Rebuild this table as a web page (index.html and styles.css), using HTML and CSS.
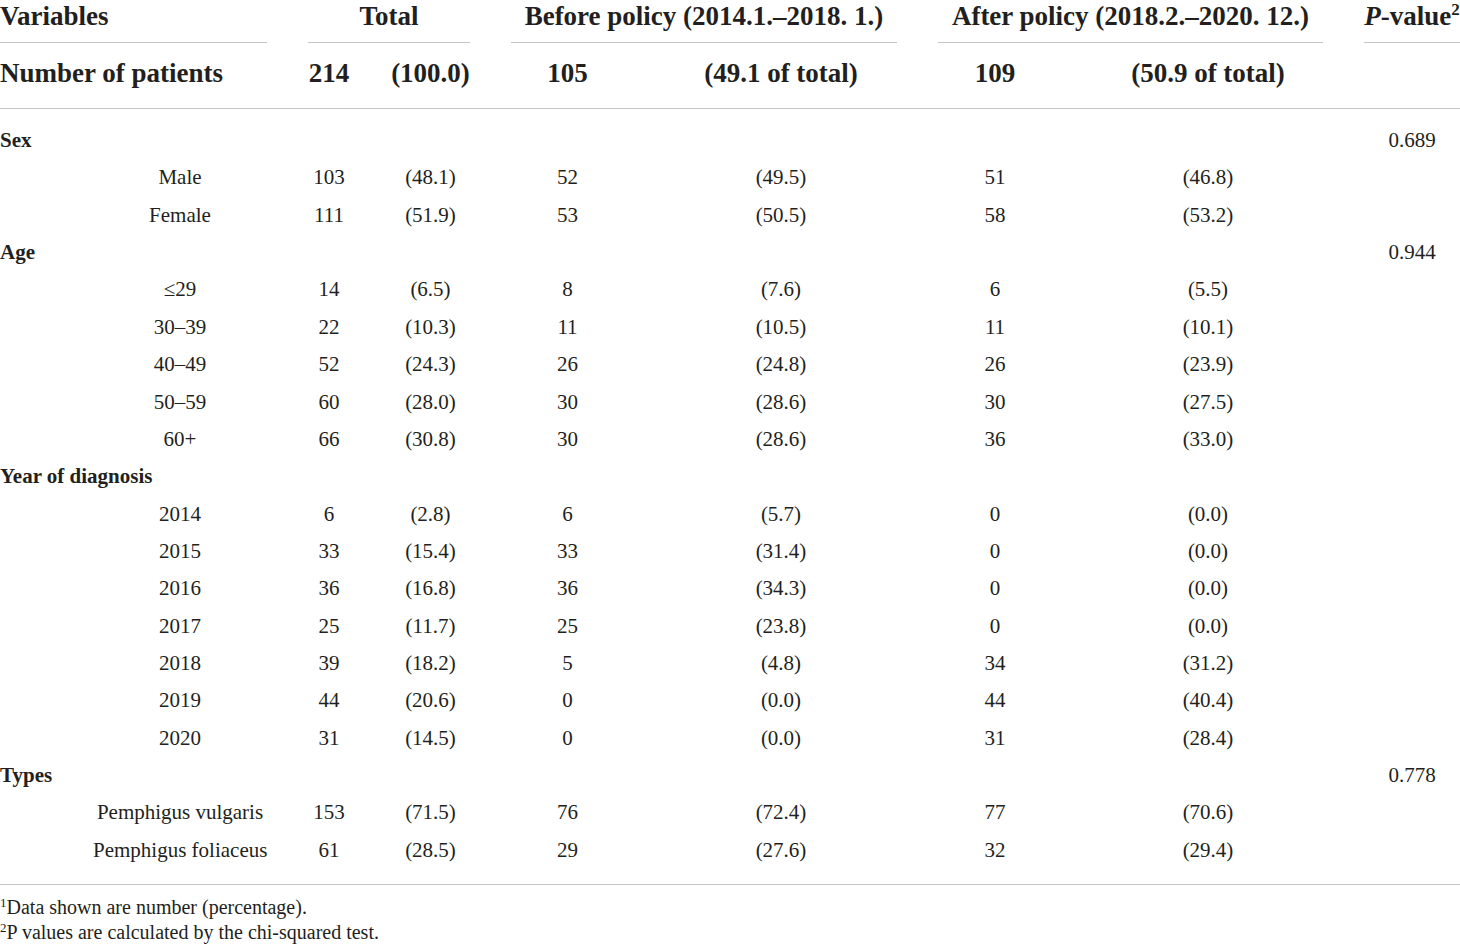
FILE: index.html
```html
<!DOCTYPE html>
<html lang="en">
<head>
    <meta charset="UTF-8">
    <meta name="viewport" content="width=device-width, initial-scale=1.0">
    <title>Patient characteristics before and after policy</title>
    <link rel="stylesheet" href="styles.css">
</head>
<body>
    <div class="tbl">
        <!-- Header -->
        <div class="head left">Variables</div>
        <div class="head span2">Total</div>
        <div class="head span2">Before policy (2014.1.&ndash;2018. 1.)</div>
        <div class="head span2">After policy (2018.2.&ndash;2020. 12.)</div>
        <div class="head"><i>P</i>-value<sup>2</sup></div>

        <div class="lead left">Number of patients</div>
        <div class="lead">214</div>
        <div class="lead">(100.0)</div>
        <div class="lead">105</div>
        <div class="lead">(49.1 of total)</div>
        <div class="lead">109</div>
        <div class="lead">(50.9 of total)</div>
        <div class="lead"></div>

        <div class="rule"></div>
        <div class="space-top"></div>

        <!-- Sex -->
        <div class="cat">Sex</div>
        <div class="cell pcol">0.689</div>

        <div class="cell sub">Male</div><div class="cell">103</div><div class="cell">(48.1)</div><div class="cell">52</div><div class="cell">(49.5)</div><div class="cell">51</div><div class="cell">(46.8)</div><div class="cell"></div>
        <div class="cell sub">Female</div><div class="cell">111</div><div class="cell">(51.9)</div><div class="cell">53</div><div class="cell">(50.5)</div><div class="cell">58</div><div class="cell">(53.2)</div><div class="cell"></div>

        <!-- Age -->
        <div class="cat">Age</div>
        <div class="cell pcol">0.944</div>

        <div class="cell sub">&le;29</div><div class="cell">14</div><div class="cell">(6.5)</div><div class="cell">8</div><div class="cell">(7.6)</div><div class="cell">6</div><div class="cell">(5.5)</div><div class="cell"></div>
        <div class="cell sub">30&ndash;39</div><div class="cell">22</div><div class="cell">(10.3)</div><div class="cell">11</div><div class="cell">(10.5)</div><div class="cell">11</div><div class="cell">(10.1)</div><div class="cell"></div>
        <div class="cell sub">40&ndash;49</div><div class="cell">52</div><div class="cell">(24.3)</div><div class="cell">26</div><div class="cell">(24.8)</div><div class="cell">26</div><div class="cell">(23.9)</div><div class="cell"></div>
        <div class="cell sub">50&ndash;59</div><div class="cell">60</div><div class="cell">(28.0)</div><div class="cell">30</div><div class="cell">(28.6)</div><div class="cell">30</div><div class="cell">(27.5)</div><div class="cell"></div>
        <div class="cell sub">60+</div><div class="cell">66</div><div class="cell">(30.8)</div><div class="cell">30</div><div class="cell">(28.6)</div><div class="cell">36</div><div class="cell">(33.0)</div><div class="cell"></div>

        <!-- Year of diagnosis -->
        <div class="cat">Year of diagnosis</div>
        <div class="cell pcol"></div>

        <div class="cell sub">2014</div><div class="cell">6</div><div class="cell">(2.8)</div><div class="cell">6</div><div class="cell">(5.7)</div><div class="cell">0</div><div class="cell">(0.0)</div><div class="cell"></div>
        <div class="cell sub">2015</div><div class="cell">33</div><div class="cell">(15.4)</div><div class="cell">33</div><div class="cell">(31.4)</div><div class="cell">0</div><div class="cell">(0.0)</div><div class="cell"></div>
        <div class="cell sub">2016</div><div class="cell">36</div><div class="cell">(16.8)</div><div class="cell">36</div><div class="cell">(34.3)</div><div class="cell">0</div><div class="cell">(0.0)</div><div class="cell"></div>
        <div class="cell sub">2017</div><div class="cell">25</div><div class="cell">(11.7)</div><div class="cell">25</div><div class="cell">(23.8)</div><div class="cell">0</div><div class="cell">(0.0)</div><div class="cell"></div>
        <div class="cell sub">2018</div><div class="cell">39</div><div class="cell">(18.2)</div><div class="cell">5</div><div class="cell">(4.8)</div><div class="cell">34</div><div class="cell">(31.2)</div><div class="cell"></div>
        <div class="cell sub">2019</div><div class="cell">44</div><div class="cell">(20.6)</div><div class="cell">0</div><div class="cell">(0.0)</div><div class="cell">44</div><div class="cell">(40.4)</div><div class="cell"></div>
        <div class="cell sub">2020</div><div class="cell">31</div><div class="cell">(14.5)</div><div class="cell">0</div><div class="cell">(0.0)</div><div class="cell">31</div><div class="cell">(28.4)</div><div class="cell"></div>

        <!-- Types -->
        <div class="cat">Types</div>
        <div class="cell pcol">0.778</div>

        <div class="cell sub">Pemphigus vulgaris</div><div class="cell">153</div><div class="cell">(71.5)</div><div class="cell">76</div><div class="cell">(72.4)</div><div class="cell">77</div><div class="cell">(70.6)</div><div class="cell"></div>
        <div class="cell sub">Pemphigus foliaceus</div><div class="cell">61</div><div class="cell">(28.5)</div><div class="cell">29</div><div class="cell">(27.6)</div><div class="cell">32</div><div class="cell">(29.4)</div><div class="cell"></div>

        <div class="space-bottom"></div>
        <div class="rule"></div>
    </div>

    <div class="notes">
        <p><sup>1</sup>Data shown are number (percentage).</p>
        <p><sup>2</sup>P values are calculated by the chi-squared test.</p>
    </div>
</body>
</html>
```

FILE: styles.css
```css
* {
    margin: 0;
    padding: 0;
    box-sizing: border-box;
}

body {
    font-family: 'Liberation Serif', 'Times New Roman', serif;
    color: #231f20;
    background: #ffffff;
    width: 1460px;
    overflow: hidden;
}

/* Table grid */
.tbl {
    display: grid;
    grid-template-columns: 267px 42px 79px 113px 232px 114px 230px 96px;
    column-gap: 41px;
    text-align: center;
}

.left {
    text-align: left;
}

.head {
    font-size: 27px;
    font-weight: bold;
    line-height: 32px;
    padding-bottom: 10px;
    border-bottom: 1px solid #c4c4c4;
    white-space: nowrap;
}

.head.span2 {
    grid-column: span 2;
}

.head sup {
    font-size: 17px;
    line-height: 0;
    vertical-align: 10px;
}

.lead {
    font-size: 27px;
    font-weight: bold;
    line-height: 32px;
    padding-top: 14px;
    padding-bottom: 19px;
    white-space: nowrap;
}

.rule {
    grid-column: 1 / -1;
    height: 1px;
    background: #c4c4c4;
}

.space-top {
    grid-column: 1 / -1;
    height: 13px;
}

.space-bottom {
    grid-column: 1 / -1;
    height: 15px;
}

.cell,
.cat {
    font-size: 21px;
    line-height: 37.37px;
    height: 37.37px;
    white-space: nowrap;
}

.cat {
    grid-column: 1 / 8;
    font-weight: bold;
    text-align: left;
}

.pcol {
    grid-column: 8;
}

.sub {
    padding-left: 93px;
}

/* Footnotes */
.notes {
    padding-top: 10px;
    font-size: 20px;
    line-height: 25px;
}

.notes sup {
    font-size: 13px;
    line-height: 0;
    vertical-align: 7px;
}
```
